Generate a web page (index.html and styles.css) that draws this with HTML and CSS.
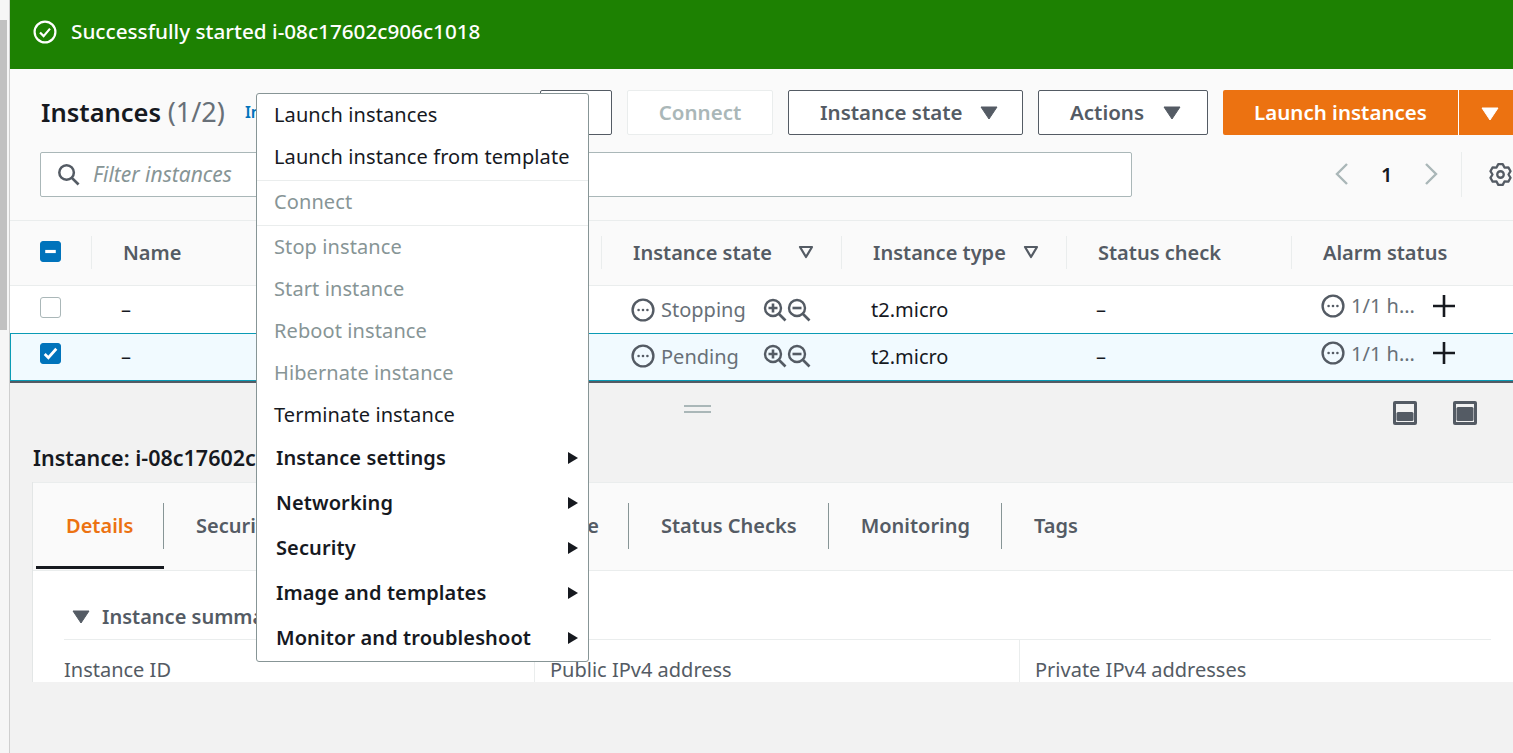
FILE: index.html
```html
<!DOCTYPE html>
<html lang="en">
<head>
  <meta charset="UTF-8">
  <title>Instances</title>
  <link rel="stylesheet" href="styles.css">
</head>
<body>
  <svg class="icon-defs" width="0" height="0">
    <defs>
      <symbol id="status" viewBox="0 0 24 24">
        <circle cx="12" cy="12" r="10.4" fill="none" stroke="currentColor" stroke-width="2.4"/>
        <circle cx="7.6" cy="12" r="1.3" fill="currentColor"/>
        <circle cx="12" cy="12" r="1.3" fill="currentColor"/>
        <circle cx="16.4" cy="12" r="1.3" fill="currentColor"/>
      </symbol>
      <symbol id="zoom-in" viewBox="0 0 24 24">
        <circle cx="10" cy="10" r="8" fill="none" stroke="currentColor" stroke-width="2.4"/>
        <path d="M16 16l6.5 6.5" fill="none" stroke="currentColor" stroke-width="2.6"/>
        <path d="M10 5.5v9M5.5 10h9" fill="none" stroke="currentColor" stroke-width="2.6"/>
      </symbol>
      <symbol id="zoom-out" viewBox="0 0 24 24">
        <circle cx="10" cy="10" r="8" fill="none" stroke="currentColor" stroke-width="2.4"/>
        <path d="M16 16l6.5 6.5" fill="none" stroke="currentColor" stroke-width="2.6"/>
        <path d="M5.5 10h9" fill="none" stroke="currentColor" stroke-width="2.6"/>
      </symbol>
      <symbol id="plus" viewBox="0 0 22 22">
        <path d="M11 0v22M0 11h22" fill="none" stroke="currentColor" stroke-width="2.6"/>
      </symbol>
      <symbol id="filter-caret" viewBox="0 0 16 14">
        <path d="M2 2h12L8 12z" fill="none" stroke="currentColor" stroke-width="2.2" stroke-linejoin="round"/>
      </symbol>
      <symbol id="caret-down" viewBox="0 0 18 14">
        <path d="M1 1h16L9 13z" fill="currentColor" stroke="currentColor" stroke-linejoin="round"/>
      </symbol>
      <symbol id="caret-right" viewBox="0 0 12 14">
        <path d="M1 1l10 6-10 6z" fill="currentColor"/>
      </symbol>
    </defs>
  </svg>

  <div class="scrollbar">
    <div class="scrollbar-thumb"></div>
  </div>

  <div class="page">
    <div class="flash">
      <svg class="flash-icon" viewBox="0 0 24 24">
        <circle cx="12" cy="12" r="10.4" fill="none" stroke="#fff" stroke-width="2.2"/>
        <path d="M7 12.5l3.6 3.6L17 8.6" fill="none" stroke="#fff" stroke-width="2.2"/>
      </svg>
      <span>Successfully started i-08c17602c906c1018</span>
    </div>

    <div class="instances">
      <div class="toolbar">
        <div class="title-block">
          <h1>Instances <span class="count">(1/2)</span></h1>
          <a class="info-link">Info</a>
        </div>
        <button class="btn btn-hidden"></button>
        <button class="btn btn-connect" disabled>Connect</button>
        <button class="btn btn-state">Instance state <svg class="btn-caret"><use href="#caret-down"/></svg></button>
        <button class="btn btn-actions">Actions <svg class="btn-caret"><use href="#caret-down"/></svg></button>
        <div class="btn-launch">
          <span class="launch-label">Launch instances</span>
          <span class="launch-drop"><svg class="btn-caret"><use href="#caret-down"/></svg></span>
        </div>
      </div>

      <div class="filter-row">
        <div class="filter">
          <svg class="search-icon" viewBox="0 0 24 24">
            <circle cx="10" cy="10" r="7.6" fill="none" stroke="currentColor" stroke-width="2.6"/>
            <path d="M15.5 15.5l7 7" fill="none" stroke="currentColor" stroke-width="2.8"/>
          </svg>
          <span>Filter instances</span>
        </div>
        <div class="pager">
          <svg class="chevron" viewBox="0 0 16 24"><path d="M13 2L3 12l10 10" fill="none" stroke="currentColor" stroke-width="2.4"/></svg>
          <span class="page-num">1</span>
          <svg class="chevron" viewBox="0 0 16 24"><path d="M3 2l10 10L3 22" fill="none" stroke="currentColor" stroke-width="2.4"/></svg>
        </div>
        <div class="settings">
          <svg class="gear" viewBox="-1 -1 26 26">
            <path d="M9.71 1.24h4.58l1.86 3.57 4.02-.17 2.29 3.96-2.16 3.4 2.16 3.4-2.29 3.96-4.02-.17-1.86 3.57H9.71l-1.86-3.57-4.02.17-2.29-3.96L3.7 12 1.54 8.6l2.29-3.96 4.02.17z" fill="none" stroke="currentColor" stroke-width="2.4" stroke-linejoin="round"/>
            <circle cx="12" cy="12" r="3.4" fill="none" stroke="currentColor" stroke-width="2.4"/>
          </svg>
        </div>
      </div>

      <div class="table-row table-head">
        <div class="cell cell-check"><span class="box box-on"><svg viewBox="0 0 18 18"><path d="M4 9h10" fill="none" stroke="#fff" stroke-width="3"/></svg></span></div>
        <div class="cell">Name</div>
        <div class="cell">Instance state <svg class="sort-caret"><use href="#filter-caret"/></svg></div>
        <div class="cell">Instance type <svg class="sort-caret"><use href="#filter-caret"/></svg></div>
        <div class="cell">Status check</div>
        <div class="cell">Alarm status</div>
      </div>

      <div class="table-row row-plain">
        <div class="cell cell-check"><span class="box"></span></div>
        <div class="cell">–</div>
        <div class="cell cell-state">
          <svg class="status-icon"><use href="#status"/></svg>
          <span class="state-text">Stopping</span>
          <svg class="zoom"><use href="#zoom-in"/></svg>
          <svg class="zoom"><use href="#zoom-out"/></svg>
        </div>
        <div class="cell">t2.micro</div>
        <div class="cell">–</div>
        <div class="cell cell-alarm">
          <svg class="status-icon"><use href="#status"/></svg>
          <span class="alarm-text">1/1 h...</span>
          <svg class="plus"><use href="#plus"/></svg>
        </div>
      </div>

      <div class="table-row row-selected">
        <div class="cell cell-check"><span class="box box-on"><svg viewBox="0 0 18 18"><path d="M3.5 9.5l3.5 3.5 7.5-8.500" fill="none" stroke="#fff" stroke-width="2.6"/></svg></span></div>
        <div class="cell">–</div>
        <div class="cell cell-state">
          <svg class="status-icon"><use href="#status"/></svg>
          <span class="state-text">Pending</span>
          <svg class="zoom"><use href="#zoom-in"/></svg>
          <svg class="zoom"><use href="#zoom-out"/></svg>
        </div>
        <div class="cell">t2.micro</div>
        <div class="cell">–</div>
        <div class="cell cell-alarm">
          <svg class="status-icon"><use href="#status"/></svg>
          <span class="alarm-text">1/1 h...</span>
          <svg class="plus"><use href="#plus"/></svg>
        </div>
      </div>
    </div>

    <div class="lower">
      <div class="split-bar">
        <div class="handle"></div>
        <div class="split-icons">
          <svg class="split-icon" viewBox="0 0 24 24">
            <rect width="24" height="24" rx="2" fill="#545b64"/>
            <rect x="3" y="3" width="18" height="18" fill="#f2f2f2"/>
            <rect x="3.5" y="11" width="17" height="9" rx="1.5" fill="#545b64"/>
          </svg>
          <svg class="split-icon" viewBox="0 0 24 24">
            <rect width="24" height="24" rx="2" fill="#545b64"/>
            <rect x="3" y="3" width="18" height="18" fill="#f2f2f2"/>
            <rect x="3.5" y="6" width="17" height="14" rx="1.5" fill="#545b64"/>
          </svg>
        </div>
      </div>

      <h2 class="detail-title">Instance: i-08c17602c906c1018</h2>

      <div class="detail-panel">
        <div class="tabs">
          <div class="tab tab-active">Details</div>
          <div class="tab tab-security">Security</div>
          <div class="tab tab-networking">Networking</div>
          <div class="tab tab-storage">Storage</div>
          <div class="tab">Status Checks</div>
          <div class="tab">Monitoring</div>
          <div class="tab tab-last">Tags</div>
        </div>
        <div class="detail-body">
          <div class="summary-head">
            <svg class="summary-caret"><use href="#caret-down"/></svg>
            <span>Instance summary</span>
          </div>
          <div class="summary-cols">
            <div class="summary-col">Instance ID</div>
            <div class="summary-col">Public IPv4 address</div>
            <div class="summary-col">Private IPv4 addresses</div>
          </div>
        </div>
      </div>
    </div>
  </div>

  <div class="menu">
    <div class="menu-item">Launch instances</div>
    <div class="menu-item">Launch instance from template</div>
    <div class="menu-group">
      <div class="menu-item menu-off">Connect</div>
    </div>
    <div class="menu-item menu-off">Stop instance</div>
    <div class="menu-item menu-off">Start instance</div>
    <div class="menu-item menu-off">Reboot instance</div>
    <div class="menu-item menu-off">Hibernate instance</div>
    <div class="menu-item menu-last">Terminate instance</div>
    <div class="menu-sub">Instance settings <svg class="sub-caret"><use href="#caret-right"/></svg></div>
    <div class="menu-sub">Networking <svg class="sub-caret"><use href="#caret-right"/></svg></div>
    <div class="menu-sub">Security <svg class="sub-caret"><use href="#caret-right"/></svg></div>
    <div class="menu-sub">Image and templates <svg class="sub-caret"><use href="#caret-right"/></svg></div>
    <div class="menu-sub">Monitor and troubleshoot <svg class="sub-caret"><use href="#caret-right"/></svg></div>
  </div>
</body>
</html>
```

FILE: styles.css
```css
* {
  box-sizing: border-box;
}

html,
body {
  height: 100%;
}

body {
  margin: 0;
  display: flex;
  overflow: hidden;
  font-family: "Noto Sans", Arial, sans-serif;
  font-size: 20px;
  color: #16191f;
  background: #f2f2f2;
}

.icon-defs {
  position: absolute;
}

.scrollbar {
  flex: 0 0 10px;
  background: #f6f6f6;
  border-right: 1px solid #cfcfcf;
  padding-top: 20px;
}

.scrollbar-thumb {
  width: 7px;
  height: 310px;
  background: #c1c1c1;
}

.page {
  flex: 1;
  min-width: 0;
  overflow: hidden;
}

/* green banner */
.flash {
  height: 69px;
  background: #1d8102;
  color: #fff;
  display: flex;
  align-items: center;
  gap: 14px;
  padding: 0 0 8px 23px;
  font-size: 20.7px;
  font-weight: 500;
}

.flash-icon {
  width: 24px;
  height: 24px;
  margin-top: 2px;
}

/* instances table area */
.instances {
  background: #fafafa;
}

.toolbar {
  display: flex;
  gap: 15px;
  padding: 21px 0 0 31px;
  width: 1600px;
  height: 66px;
}

.title-block {
  width: 484px;
  display: flex;
  align-items: center;
  gap: 20px;
  padding-bottom: 2px;
}

h1 {
  margin: 0;
  font-size: 25.5px;
  font-weight: 600;
  white-space: nowrap;
}

.count {
  font-size: 27px;
  font-weight: 400;
  color: #687078;
}

.info-link {
  color: #0073bb;
  font-size: 16px;
  font-weight: 600;
}

.btn {
  height: 45px;
  background: #fff;
  border: 1px solid #545b64;
  border-radius: 2px;
  font: 600 20.5px "Noto Sans", Arial, sans-serif;
  color: #545b64;
  display: flex;
  align-items: center;
  justify-content: center;
  padding: 0 0 2px;
}

.btn-hidden {
  width: 72px;
}

.btn-connect {
  width: 146px;
  color: #aab7b8;
  border-color: #eaeded;
}

.btn-state {
  width: 235px;
  gap: 17px;
  justify-content: flex-start;
  padding-left: 31px;
}

.btn-actions {
  width: 170px;
  gap: 19px;
  justify-content: flex-start;
  padding-left: 31px;
}

.btn-caret {
  width: 18px;
  height: 14px;
  margin-top: 2px;
}

.btn-launch {
  height: 45px;
  width: 330px;
  background: #ec7211;
  border-radius: 2px;
  color: #fff;
  font-size: 20.5px;
  font-weight: 600;
  display: flex;
  align-items: center;
}

.launch-label {
  width: 236px;
  height: 100%;
  display: flex;
  align-items: center;
  justify-content: center;
  padding-bottom: 2px;
  border-right: 1px solid #fff;
}

.launch-drop {
  padding-left: 22px;
  display: flex;
}

.filter-row {
  display: flex;
  align-items: center;
  width: 1600px;
  padding-left: 30px;
  height: 86px;
  padding-bottom: 7px;
  border-bottom: 1px solid #eaeded;
}

.filter {
  width: 1092px;
  height: 45px;
  background: #fff;
  border: 1px solid #aab7b8;
  border-radius: 2px;
  display: flex;
  align-items: center;
  gap: 13px;
  padding-left: 16px;
  color: #879596;
  font-size: 21px;
  font-style: italic;
}

.search-icon {
  width: 23px;
  height: 23px;
  color: #545b64;
}

.pager {
  display: flex;
  align-items: center;
  gap: 31px;
  margin-left: 202px;
  color: #aab7b8;
}

.chevron {
  width: 16px;
  height: 24px;
}

.page-num {
  color: #16191f;
  font-weight: 600;
}

.settings {
  height: 45px;
  margin-left: 22px;
  padding-left: 26px;
  border-left: 1px solid #eaeded;
  display: flex;
  align-items: center;
}

.gear {
  width: 25px;
  height: 25px;
  color: #545b64;
}

.table-row {
  display: grid;
  grid-template-columns: 81px 510px 240px 225px 225px 195px 1fr;
  align-items: center;
}

.table-head {
  height: 65px;
  border-bottom: 1px solid #eaeded;
  padding-bottom: 2px;
  color: #545b64;
  font-weight: 600;
}

.table-head .cell {
  height: 33px;
  padding-left: 31px;
  border-left: 1px solid #eaeded;
  display: flex;
  align-items: center;
}

.table-head .cell-check {
  border-left: none;
  padding-left: 30px;
}

.table-head .cell-check .box {
  margin-bottom: 1px;
}

.table-head .cell:nth-child(3),
.table-head .cell:nth-child(4) {
  justify-content: space-between;
  padding-right: 27px;
}

.sort-caret {
  width: 16px;
  height: 14px;
}

.row-plain,
.row-selected {
  height: 47px;
  background: #fff;
  color: #16191f;
}

.row-selected {
  background: #f1faff;
  border: solid #0a9bb5;
  border-width: 1px 0 1px 1px;
  height: 48px;
  padding-bottom: 2px;
}

.row-plain .cell {
  padding-left: 30px;
}

.row-selected .cell {
  padding-left: 29px;
}

.cell-check .box {
  margin-bottom: 5px;
}

.box {
  display: block;
  width: 21px;
  height: 21px;
  border: 1px solid #aab7b8;
  border-radius: 3px;
  background: #fff;
}

.box-on {
  background: #0073bb;
  border-color: #0073bb;
}

.box svg {
  display: block;
  width: 100%;
  height: 100%;
}

.cell-state {
  display: flex;
  align-items: center;
  color: #687078;
}

.status-icon {
  width: 24px;
  height: 24px;
  flex: none;
  color: #545b64;
}

.state-text {
  width: 108px;
  padding-left: 6px;
}

.zoom {
  width: 24px;
  height: 24px;
  flex: none;
  color: #545b64;
}

.cell-alarm {
  display: flex;
  align-items: center;
  padding-bottom: 8px;
  color: #687078;
}

.row-selected .cell-alarm {
  padding-bottom: 6px;
}

.alarm-text {
  padding-left: 6px;
  width: 88px;
  white-space: nowrap;
}

.plus {
  width: 22px;
  height: 22px;
  color: #16191f;
}

/* split pane below the table */
.lower {
  border-top: 2px solid #545b64;
  height: 400px;
}

.split-bar {
  height: 59px;
  position: relative;
  display: flex;
  justify-content: flex-end;
  padding: 18px 36px 0 0;
}

.handle {
  position: absolute;
  left: 674px;
  top: 22px;
  width: 27px;
  height: 8px;
  border-top: 2px solid #aab7b8;
  border-bottom: 2px solid #aab7b8;
}

.split-icons {
  display: flex;
  gap: 36px;
}

.split-icon {
  width: 24px;
  height: 24px;
}

.detail-title {
  margin: 0;
  padding-left: 23px;
  height: 40px;
  line-height: 32px;
  font-size: 21.5px;
  font-weight: 600;
  white-space: nowrap;
}

.detail-panel {
  margin-left: 22px;
  height: 200px;
  background: #fff;
  overflow: hidden;
  border-left: 1px solid #e3e6e6;
}

.tabs {
  height: 89px;
  background: #fafafa;
  border-top: 1px solid #eaeded;
  border-bottom: 1px solid #eaeded;
  display: flex;
  padding-left: 3px;
  color: #545b64;
  font-weight: 600;
}

.tab {
  position: relative;
  display: flex;
  align-items: center;
  padding: 0 32px 1px;
  height: 86px;
  white-space: nowrap;
}

.tab::after {
  content: "";
  position: absolute;
  right: 0;
  top: 20px;
  height: 46px;
  border-right: 1px solid #879596;
}

.tab-last::after {
  display: none;
}

.tab-active {
  color: #ec7211;
  width: 128px;
  padding: 1px 30px 0;
  border-bottom: 3px solid #16191f;
}

.tab-security {
  width: 141px;
}

.tab-networking {
  width: 165px;
}

.tab-storage {
  width: 159px;
  justify-content: flex-end;
  padding-right: 30px;
}

.detail-body {
  padding: 31px 22px 0 31px;
}

.summary-head {
  display: flex;
  align-items: center;
  gap: 12px;
  height: 38px;
  padding-left: 8px;
  border-bottom: 1px solid #eaeded;
  color: #545b64;
  font-weight: 600;
  padding-bottom: 8px;
}

.summary-caret {
  width: 18px;
  height: 14px;
}

.summary-cols {
  display: grid;
  grid-template-columns: 470px 485px 1fr;
  color: #545b64;
}

.summary-col {
  padding: 16px 0 0 15px;
  height: 60px;
  border-left: 1px solid #eaeded;
}

.summary-col:first-child {
  padding-left: 0;
  border-left: none;
}

/* open dropdown, sits over the page */
.menu {
  position: absolute;
  left: 256px;
  top: 93px;
  width: 333px;
  height: 569px;
  background: #fff;
  border: 1px solid #879596;
  border-radius: 3px;
  padding-top: 1px;
  letter-spacing: 0.1px;
}

.menu-item {
  height: 42px;
  line-height: 40px;
  padding-left: 17px;
  white-space: nowrap;
}

.menu-group {
  margin: 1px 0;
  height: 46px;
  border-top: 1px solid #eaeded;
  border-bottom: 1px solid #eaeded;
}

.menu-group .menu-item {
  height: 44px;
  line-height: 42px;
}

.menu-off {
  color: #879596;
}

.menu-last {
  height: 40px;
}

.menu-sub {
  height: 45px;
  display: flex;
  align-items: center;
  justify-content: space-between;
  padding: 0 9px 0 19px;
  font-weight: 600;
  white-space: nowrap;
}

.sub-caret {
  width: 12px;
  height: 14px;
}
```
